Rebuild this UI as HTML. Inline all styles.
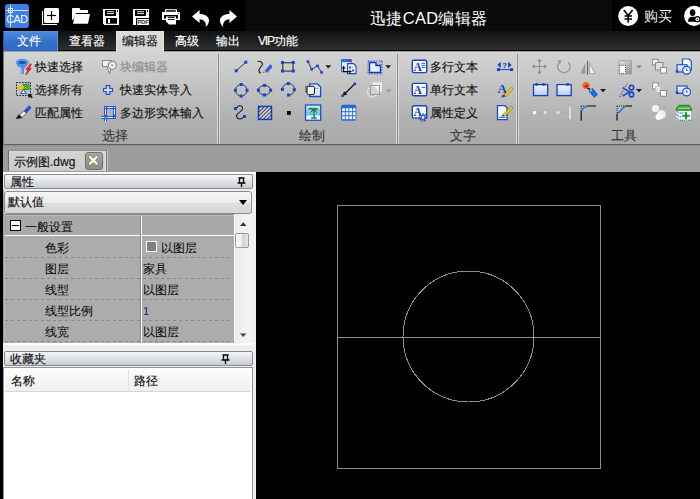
<!DOCTYPE html>
<html><head><meta charset="utf-8">
<style>
*{margin:0;padding:0;box-sizing:border-box}
html,body{width:700px;height:499px;overflow:hidden;background:#000;font-family:"Liberation Sans",sans-serif}
.a{position:absolute}
#title{left:0;top:0;width:700px;height:31px;background:#0a0a0a}
#tl{left:0;top:0;width:245px;height:31px;background:#000}
#tr{left:612px;top:0;width:88px;height:31px;background:#000}
#ttl{left:370px;top:8px;color:#fff;font-size:16.4px;letter-spacing:0.35px;line-height:20px;white-space:nowrap}
#tabs{left:3px;top:31px;width:697px;height:19px;background:linear-gradient(#101111,#1e1f1f 50%,#2f3031)}
#tabline{left:0;top:50px;width:700px;height:1px;background:#000}
.tab{height:19px;color:#fff;font-size:12px;line-height:20px;white-space:nowrap;-webkit-text-stroke:0.15px #fff}
#file{left:3px;top:31px;width:55px;height:20px;padding-right:3px;background:linear-gradient(#4c88dc,#3470c8 55%,#2f68c4);border:1px solid #5b94e4;border-left-color:#2456b0;border-bottom:none;color:#fff;font-size:12px;line-height:18px;text-align:center;-webkit-text-stroke:0.15px #fff}
#seltab{left:116px;top:31px;width:48px;height:21px;padding-right:1px;border-right:1px solid #e2e2e2;background:linear-gradient(#dcdcdc,#d4d4d4);border-left:1px solid #e4e4e4;border-top:1px solid #e0e0e0;color:#111;font-size:12px;line-height:18px;text-align:center;-webkit-text-stroke:0.15px currentColor}
#ribbon{left:3px;top:51px;width:697px;height:94px;border-left:1px solid #7c7c7c;background:linear-gradient(#9a9a9a 0 1px,#d8d8d8 1px,#d3d3d3 2px,#c4c4c4 35%,#b0b0b0 75%,#aaaaaa calc(100% - 1px),#5e5e5e calc(100% - 1px))}
.sep{top:54px;width:3px;height:90px;background:linear-gradient(90deg,#dadada 0 1px,#8a8a8a 1px 2px,#dadada 2px)}
.rt{font-size:12px;line-height:14px;color:#111;white-space:nowrap;-webkit-text-stroke:0.15px currentColor}
.gl{font-size:13px;line-height:14px;color:#333;white-space:nowrap;-webkit-text-stroke:0.1px currentColor}
#doc{left:3px;top:145px;width:697px;height:27px;background:linear-gradient(#929292 0 1px,#979797 1px 2px,#9c9c9c 2px)}
#dtab{left:8px;top:150px;width:99px;height:21px;background:linear-gradient(#d4d4d4,#cacaca);border-top:1px solid #8e8e8e;border-left:1px solid #707070;border-right:1px solid #7a7a7a;box-shadow:inset -2px 0 0 #dadada, 1px 0 0 #c4c4c4}
#dclose{left:85px;top:152px;width:18px;height:18px;border-radius:3px;background:linear-gradient(#a8a8a8,#8a8a8a);border:1px solid #707070}
#panel{left:3px;top:172px;width:253px;height:327px;background:#efefef;border-top:2px solid #fff}
#canvas{left:256px;top:172px;width:444px;height:327px;background:#000}
.hdr{height:15px;border:1px solid #8a8a8a;border-radius:2px;background:linear-gradient(#f6f6f7,#e0e2e5 50%,#c8ccd2);font-size:12px;line-height:14px;color:#101020;padding-left:5px;-webkit-text-stroke:0.15px currentColor}
#combo{left:4px;top:191px;width:248px;height:23px;border:1px solid #8c8c8c;border-radius:3px;background:linear-gradient(#f6f6f6,#ececec 50%,#dedede 52%,#d8d8d8);font-size:12px;line-height:21px;padding-left:3px;color:#111;-webkit-text-stroke:0.15px currentColor}
#grid{left:3px;top:214px;width:231px;height:129px;background:#acacac;border-top:1px solid #8a8a8a;border-left:1px solid #9a9a9a;box-shadow:inset 1px 0 0 #b8b8b8}
.gt{font-size:12px;line-height:14px;color:#000;white-space:nowrap}
.dash{left:5px;width:229px;height:1px;background:repeating-linear-gradient(90deg,#888 0 3px,transparent 3px 6px)}
#sbar{left:234px;top:215px;width:17px;height:128px;background:linear-gradient(90deg,#fff 0 1px,#ececec 1px,#f4f4f4)}
#list{left:3px;top:367px;width:250px;height:132px;background:#fff;border-left:1px solid #8c96a0;border-right:1px solid #8c96a0;border-top:1px solid #8c96a0}
#lhdr{left:5px;top:368px;width:245px;height:24px;background:linear-gradient(#ffffff,#f6f6f7 50%,#eeeff1);border-bottom:1px solid #d6d6d6}
</style></head><body>
<div class="a" id="title"></div>
<div class="a" id="tl"></div>
<div class="a" id="tr"></div>
<svg class="a" style="left:0;top:0" width="700" height="31">
<rect x="5" y="4" width="24" height="24" rx="3" fill="#3d7ee9"/>
<g stroke="#d8e6ff" stroke-width="1" fill="none">
<line x1="10.5" y1="5" x2="10.5" y2="27"/>
<line x1="6" y1="10.5" x2="28" y2="10.5"/>
<rect x="8.5" y="8.5" width="4" height="4"/>
</g>
<text x="6.3" y="23" font-family="Liberation Sans" font-size="10.6" fill="#fff" letter-spacing="-0.4">CAD</text>
<g fill="#fff">
<rect x="44" y="8" width="15" height="15" rx="1.5"/>
<rect x="42" y="11" width="1" height="14"/>
<rect x="42" y="24" width="15" height="1"/>
</g>
<g stroke="#000" stroke-width="1.2"><line x1="51.5" y1="11" x2="51.5" y2="20"/><line x1="47" y1="15.5" x2="56" y2="15.5"/></g>
<g fill="#fff">
<path d="M72,8.5 Q72,8 73,8 L79.5,8 L80.5,10 L87.5,10 Q88,10 88,11 L88,13 L76,13 L73,20 L72,20 Z"/>
<path d="M75,14 L90,14 L88,23.8 L73,23.8 Z"/>
</g>
<g>
<rect x="103" y="9" width="16" height="16" fill="#fff"/>
<rect x="105" y="10" width="11" height="6" fill="#000"/>
<rect x="107" y="11.3" width="7" height="0.9" fill="#fff"/>
<rect x="107" y="13.2" width="7" height="0.9" fill="#fff"/>
<rect x="117" y="10" width="1" height="2" fill="#000"/>
<rect x="106" y="18" width="11" height="5.7" fill="#000"/>
<rect x="108" y="19" width="2" height="4" fill="#fff"/>
<path d="M103,23.5 L104.5,25 L103,25Z" fill="#000"/>
</g>
<g>
<rect x="133" y="9" width="16" height="16" fill="#fff"/>
<rect x="135" y="10" width="11" height="6" fill="#000"/>
<rect x="137" y="11.3" width="7" height="0.9" fill="#fff"/>
<rect x="137" y="13.2" width="7" height="0.9" fill="#fff"/>
<rect x="147" y="10" width="1" height="2" fill="#000"/>
<rect x="136" y="18" width="13" height="7" fill="#000"/>
<rect x="137" y="19" width="12" height="6" fill="#fff"/>
<text x="137.3" y="24.3" font-family="Liberation Sans" font-size="6" font-weight="bold" fill="#333" letter-spacing="-0.2">PDF</text>
</g>
<g>
<rect x="165" y="9.2" width="12" height="3.3" fill="#fff"/>
<rect x="166.2" y="10.2" width="9.6" height="1.5" fill="#000"/>
<rect x="162" y="12" width="18" height="8" fill="#fff"/>
<circle cx="178.5" cy="13.5" r="0.6" fill="#000"/>
<rect x="164" y="15" width="14" height="3.6" fill="#000"/>
<path d="M166,16.5 L176,16.5 L176,24.6 L169,24.6 L166,21.5 Z" fill="#fff"/>
<rect x="168" y="17" width="6.5" height="0.9" fill="#000"/>
<rect x="168" y="19" width="6.5" height="0.9" fill="#000"/>
</g>
<path id="undo" fill="#fff" d="M192,16.6 L199.6,10 L199.6,14 C205,14 209,16.5 209,20.5 C209,23.2 207.5,25.5 205.7,27 C206.5,24 205,19.3 199.6,19.3 L199.6,23 Z"/>
<path fill="#fff" transform="translate(429,0) scale(-1,1)" d="M192,16.6 L199.6,10 L199.6,14 C205,14 209,16.5 209,20.5 C209,23.2 207.5,25.5 205.7,27 C206.5,24 205,19.3 199.6,19.3 L199.6,23 Z"/>
<circle cx="628.2" cy="16" r="10" fill="#fff"/>
<g stroke="#000" stroke-width="1.6" fill="none"><path d="M623.8,10 L628.2,15.5 L632.6,10 M628.2,15.5 L628.2,22.5 M624.5,16 L632,16 M624.5,19 L632,19"/></g>
<circle cx="694.2" cy="15.8" r="10.1" fill="#fff"/>
<g fill="#000"><ellipse cx="692.6" cy="12.6" rx="2.8" ry="3.4"/><path d="M688,21.8 Q688,17.3 691.5,16.8 L694,16.8 Q697,17.2 698,19 L698,21.8 Z"/></g>
<circle cx="697.4" cy="19.2" r="3.1" fill="#000"/><circle cx="697.4" cy="19.2" r="1.9" fill="#fff"/><circle cx="697.4" cy="19.2" r="0.8" fill="#000"/>
</svg>
<div class="a" id="ttl">迅捷CAD编辑器</div>
<div class="a" style="left:644px;top:8px;color:#ececec;font-size:14px;line-height:16px">购买</div>

<div class="a" id="tabs"></div>
<div class="a" id="tabline"></div>
<div class="a" id="ribbon"></div>
<div class="a" id="file">文件</div>
<div class="a tab" style="left:69px;top:31px">查看器</div>
<div class="a" id="seltab">编辑器</div>
<div class="a tab" style="left:175px;top:31px">高级</div>
<div class="a tab" style="left:216px;top:31px">输出</div>
<div class="a tab" style="left:258px;top:31px"><span style="letter-spacing:-1.2px">VIP</span>功能</div>

<div class="a sep" style="left:217px"></div>
<div class="a sep" style="left:396px"></div>
<div class="a sep" style="left:516px"></div>

<div class="a rt" style="left:35px;top:60px">快速选择</div>
<div class="a rt" style="left:35px;top:83px">选择所有</div>
<div class="a rt" style="left:35px;top:106px">匹配属性</div>
<div class="a rt" style="left:120px;top:60px;color:#8a8a8a">块编辑器</div>
<div class="a rt" style="left:120px;top:83px">快速实体导入</div>
<div class="a rt" style="left:120px;top:106px">多边形实体输入</div>
<div class="a gl" style="left:102px;top:129px">选择</div>
<div class="a gl" style="left:299px;top:129px">绘制</div>
<div class="a rt" style="left:430px;top:60px">多行文本</div>
<div class="a rt" style="left:430px;top:83px">单行文本</div>
<div class="a rt" style="left:430px;top:106px">属性定义</div>
<div class="a gl" style="left:450px;top:129px">文字</div>
<div class="a gl" style="left:611px;top:129px">工具</div>
<svg class="a" style="left:0;top:0" width="700" height="145">
<defs>
<linearGradient id="gBlueWin" x1="0" y1="0" x2="0" y2="1"><stop offset="0" stop-color="#f4f8ff"/><stop offset="1" stop-color="#b7cdf3"/></linearGradient>
<linearGradient id="gSky" x1="0" y1="0" x2="0" y2="1"><stop offset="0" stop-color="#c9ecfb"/><stop offset="1" stop-color="#28b3e6"/></linearGradient>
<linearGradient id="gGray" x1="0" y1="0" x2="1" y2="1"><stop offset="0" stop-color="#e6e6e6"/><stop offset="1" stop-color="#8e8e8e"/></linearGradient>
<pattern id="hatch" width="2.7" height="2.7" patternUnits="userSpaceOnUse" patternTransform="rotate(45)"><rect width="2.7" height="2.7" fill="#d0d0d0"/><rect width="0.9" height="2.7" fill="#3a3a3a"/></pattern>
</defs>
<path d="M16,62.5 C16.5,65.5 19.5,67.5 20.3,69 L20.3,73.4 Q22.2,75 24,73.4 L24,69 C24.8,67.5 27.8,65.5 28.3,62.5 Z" fill="#4b8fe4"/>
<ellipse cx="22.2" cy="62.3" rx="6.1" ry="3" fill="#6eaaf0" stroke="#3a7ad6" stroke-width="0.8"/>
<ellipse cx="22.2" cy="62.5" rx="4.3" ry="1.7" fill="#1a56c2"/>
<path d="M19.2,66.6 L21.2,69 L21.2,73.5" stroke="#b8dcff" stroke-width="1" fill="none"/>
<path d="M30.2,63.2 L31.8,64.5 L29.8,68 L31.8,68.3 L26.3,75 L25.3,74.3 L27.6,70.2 L25.4,69.8 Z" fill="#e3191b"/>
<path d="M29.5,65 L27.5,69" stroke="#ff8080" stroke-width="0.6"/>
<rect x="16.5" y="82.5" width="14" height="13" fill="none" stroke="#222" stroke-width="1" stroke-dasharray="1.6,1.2"/>
<rect x="23" y="84" width="6.2" height="5.8" fill="#3cae3f" stroke="#2a8a2a" stroke-width="0.5"/>
<circle cx="21.2" cy="88.2" r="3" fill="#f6c200"/>
<path d="M23.5,88.2 L27.2,93.9 L19.8,93.9 Z" fill="#1d61dc"/><path d="M23.5,90.3 L25.3,93 L21.7,93 Z" fill="#fff"/>
<path d="M28,94 L32.6,94.4 L31.2,95.8 L32.8,97.4 L31.8,98.2 L30.2,96.7 L28.8,98.1 Z" fill="#000"/>
<path d="M23.8,110.8 L28.8,105.2 L31.6,107.8 L26.4,113.2 Z" fill="#1f4fc8"/>
<path d="M25.2,109.6 L29.4,105.6" stroke="#5a90f0" stroke-width="1"/>
<path d="M19.6,115.3 L23.8,110.8 L26.4,113.2 L22,117.6 Z" fill="#ececec" stroke="#3a3a3a" stroke-width="0.7"/>
<path d="M15.8,119 L18.6,114.3 L22.4,118 Z" fill="#111"/>
<rect x="102.5" y="60.5" width="8.5" height="6" fill="#f0f0f0" stroke="#8c8c8c" stroke-width="1"/>
<path d="M106.5,66 L109.6,73.6 L111,68" fill="#f2f2f2" stroke="#7a7a7a" stroke-width="1"/>
<circle cx="112.3" cy="65.3" r="4" fill="#f6f6f6" stroke="#8a8a8a" stroke-width="1.3"/>
<circle cx="112.3" cy="65.3" r="1.2" fill="#aaa"/>
<path d="M106.2,85.6 H109.8 V88.5 H112.5 V91.5 H109.8 V94.4 H106.2 V91.5 H103.5 V88.5 H106.2 Z" fill="#dcdcd6" stroke="#1a4fd8" stroke-width="1.2"/>
<g fill="#1a55da"><rect x="104" y="106" width="12" height="3"/><rect x="101" y="116" width="15" height="3"/><rect x="104" y="106" width="3" height="15"/><rect x="113" y="106" width="3" height="13"/></g>
<g fill="#fff"><rect x="107.3" y="107" width="5.4" height="1"/><rect x="107.3" y="117" width="5.4" height="1"/><rect x="101" y="117" width="3.3" height="1"/><rect x="105" y="109.3" width="1" height="5.4"/><rect x="105" y="119.3" width="1" height="1.7"/><rect x="114" y="109.3" width="1" height="5.4"/><rect x="105" y="107" width="1" height="1"/><rect x="114" y="107" width="1" height="1"/><rect x="105" y="117" width="1" height="1"/><rect x="114" y="117" width="1" height="1"/></g>
<line x1="236.5" y1="70.5" x2="245.5" y2="62.5" stroke="#333" stroke-width="1"/><rect x="234.70" y="69.30" width="3" height="3" fill="#0d46dc"/><rect x="244.30" y="60.70" width="3" height="3" fill="#0d46dc"/>
<path d="M257.5,61.5 C261,60.5 263.5,63 262,65.5 C260.5,67.5 258.5,68.5 259,71 C259.3,72.3 260,73 260.8,73.4" fill="none" stroke="#262626" stroke-width="1.2"/>
<path d="M264.5,71 L270.2,64.3 L272.3,66.3 L266.5,73 Z" fill="#1f66e6"/><path d="M266.5,73 L272.3,66.3 L271.5,68 L267.6,72.2Z" fill="#0d2f9e"/>
<path d="M262.6,74.2 L264.5,71 L266.5,73 Z" fill="#f2f2f2"/><circle cx="263.9" cy="72.3" r="0.9" fill="#e8202a"/>
<rect x="282.8" y="62.8" width="10.2" height="8.3" fill="none" stroke="#222" stroke-width="1"/><rect x="281.00" y="61.00" width="3" height="3" fill="#0d46dc"/><rect x="291.80" y="61.00" width="3" height="3" fill="#0d46dc"/><rect x="281.00" y="69.50" width="3" height="3" fill="#0d46dc"/><rect x="291.80" y="69.50" width="3" height="3" fill="#0d46dc"/>
<path d="M308,61.6 L311.7,69.3 L317.5,65.9 L321.6,72.4" fill="none" stroke="#3a3a3a" stroke-width="1"/><rect x="306.70" y="60.30" width="2.6" height="2.6" fill="#0d46dc"/><rect x="310.40" y="68.00" width="2.6" height="2.6" fill="#0d46dc"/><rect x="316.20" y="64.60" width="2.6" height="2.6" fill="#0d46dc"/><rect x="320.30" y="71.10" width="2.6" height="2.6" fill="#0d46dc"/><path d="M325.3,65.2 h6 l-3,3.2 z" fill="#1a1a1a"/>
<rect x="341.6" y="59.6" width="9.5" height="12" fill="#e4ecfa" stroke="#2564dc" stroke-width="1"/><rect x="341.1" y="59.1" width="10.5" height="3" fill="#2a70ea"/><rect x="348.2" y="59.8" width="2.4" height="1.8" fill="#e0101a"/>
<path d="M347.6,63.6 H353.5 L356,66 V73.6 H347.6 Z" fill="#f4f7fd" stroke="#1a48c4" stroke-width="1.1"/>
<rect x="349.00" y="66.50" width="2" height="2" fill="#1658e6"/><rect x="352.00" y="69.50" width="2" height="2" fill="#1658e6"/><rect x="351.5" y="66.8" width="2.5" height="0.7" fill="#888"/>
<path d="M343.6,67.5 V71.6 H349.8" fill="none" stroke="#111" stroke-width="1.2"/><path d="M341.6,68.5 L343.6,65.8 L345.6,68.5Z M349.3,69.8 L352,71.6 L349.3,73.4Z" fill="#111"/>
<rect x="368" y="61" width="14" height="13" fill="none" stroke="#1a4fcf" stroke-width="1" stroke-dasharray="1.2,1.6"/>
<path d="M369.5,62.5 L376,62.5 L376,65.5 L380.5,65.5 L380.5,72.5 L369.5,72.5 Z" fill="#e8f0fd" stroke="#0f3cb8" stroke-width="1.4"/>
<path d="M377,65 L382,60 M378.5,66 L383,61.5" stroke="#1a4fcf" stroke-width="0.8" stroke-dasharray="1,1"/>
<path d="M385.2,65.3 h6 l-3,3.2 z" fill="#1a1a1a"/>
<circle cx="241.2" cy="90.3" r="5.8" fill="none" stroke="#3a3a3a" stroke-width="1"/><rect x="239.70" y="83.00" width="3" height="3" fill="#0d46dc"/><rect x="233.90" y="88.80" width="3" height="3" fill="#0d46dc"/><rect x="245.50" y="88.80" width="3" height="3" fill="#0d46dc"/><rect x="239.70" y="94.60" width="3" height="3" fill="#0d46dc"/>
<ellipse cx="264.5" cy="90.2" rx="6.1" ry="4.8" fill="none" stroke="#3a3a3a" stroke-width="1"/><rect x="263.00" y="83.90" width="3" height="3" fill="#0d46dc"/><rect x="256.90" y="88.70" width="3" height="3" fill="#0d46dc"/><rect x="269.10" y="88.70" width="3" height="3" fill="#0d46dc"/><rect x="263.00" y="93.50" width="3" height="3" fill="#0d46dc"/>
<path d="M282.5,89.4 A6,5.9 0 1 1 288.6,95.2" fill="none" stroke="#3a3a3a" stroke-width="1"/><rect x="280.90" y="87.90" width="3" height="3" fill="#0d46dc"/><rect x="286.80" y="82.10" width="3" height="3" fill="#0d46dc"/><rect x="292.80" y="88.10" width="3" height="3" fill="#0d46dc"/><rect x="287.10" y="93.60" width="3" height="3" fill="#0d46dc"/>
<path d="M309.6,83.8 H317.5 L320.6,87 V96.5 H309.6 Z" fill="#dde7f8" stroke="#1a4cc8" stroke-width="1.3"/>
<rect x="307" y="86.3" width="7.5" height="8.3" rx="1.5" fill="#f2f2f2" stroke="#1d1d1d" stroke-width="1"/>
<path d="M305,86.8 H308 M305,89.2 H307.5 M305,91.6 H307.5" stroke="#222" stroke-width="0.9"/><path d="M314.5,88.3 H318" stroke="#666" stroke-width="0.6"/>
<line x1="344" y1="94.5" x2="354.6" y2="84" stroke="#1a1a1a" stroke-width="1.3"/><path d="M342.4,96 L344,91.2 L347.2,94.4 Z" fill="#111"/><rect x="353.50" y="82.60" width="2.6" height="2.6" fill="#0d46dc"/><rect x="341.30" y="94.70" width="2.4" height="2.4" fill="#0d46dc"/>
<circle cx="372.5" cy="92" r="5" fill="none" stroke="#ececec" stroke-width="1.6" stroke-dasharray="2,1"/><rect x="372.5" y="82.3" width="9.5" height="9.5" fill="#f0f0f0" opacity="0.9"/><rect x="370.6" y="85.6" width="8.8" height="8.8" fill="#f4f4f4" stroke="#8e8e8e" stroke-width="0.9"/><path d="M371.1,94 V86.1 A7.9,7.9 0 0 1 379,94 Z" fill="#d2d2d2"/><path d="M385.5,89.2 h6 l-3,3.2 z" fill="#9a9a9a"/>
<path d="M237,107.8 C238,105 242.6,105 242.6,108.5 C242.6,111.3 237,112.8 236.6,115.6 C236.2,118.6 240.6,120.3 243.2,117.4" fill="none" stroke="#1a1a1a" stroke-width="1.1"/><rect x="234.00" y="107.00" width="3" height="3" fill="#0d46dc"/><rect x="243.00" y="115.00" width="3" height="3" fill="#0d46dc"/>
<rect x="258.5" y="106.4" width="13" height="13" fill="url(#hatch)" stroke="#0c40cc" stroke-width="1.5"/>
<rect x="287" y="111" width="3.8" height="3.9" fill="#000"/>
<rect x="305.5" y="105" width="15.2" height="15.2" fill="url(#gSky)" stroke="#1747c2" stroke-width="1.2"/><rect x="306.2" y="115.5" width="13.8" height="4" fill="#eef6fb"/>
<path d="M313.5,108.5 C311,107 308.5,108 307.8,110 C309.5,109.3 311,109.5 312.5,110 C310.5,111 309.8,112.5 310,113.5 C311.3,112 312.2,111.3 313,111 L313.6,117.8 H315 L314.2,111 C315.5,111.5 316.5,112.5 317,114 C317.4,112 316.5,110.5 315,110 C316.8,109.5 318.3,110 319,110.5 C318.5,108.5 316,107.5 313.5,108.5 Z" fill="#1e7a3c"/><rect x="311" y="117.3" width="6" height="1.5" rx="0.7" fill="#1e7a3c"/>
<rect x="341" y="104.7" width="15.3" height="16" rx="1.8" fill="#1f6ae6"/>
<rect x="342.20" y="108.20" width="2.7" height="3" fill="#f0f5ff"/>
<rect x="345.75" y="108.20" width="2.7" height="3" fill="#f0f5ff"/>
<rect x="349.30" y="108.20" width="2.7" height="3" fill="#f0f5ff"/>
<rect x="352.85" y="108.20" width="2.7" height="3" fill="#f0f5ff"/>
<rect x="342.20" y="112.20" width="2.7" height="3" fill="#f0f5ff"/>
<rect x="345.75" y="112.20" width="2.7" height="3" fill="#f0f5ff"/>
<rect x="349.30" y="112.20" width="2.7" height="3" fill="#f0f5ff"/>
<rect x="352.85" y="112.20" width="2.7" height="3" fill="#f0f5ff"/>
<rect x="342.20" y="116.20" width="2.7" height="3" fill="#f0f5ff"/>
<rect x="345.75" y="116.20" width="2.7" height="3" fill="#f0f5ff"/>
<rect x="349.30" y="116.20" width="2.7" height="3" fill="#f0f5ff"/>
<rect x="352.85" y="116.20" width="2.7" height="3" fill="#f0f5ff"/>
<rect x="412.3" y="60.3" width="14.4" height="12.3" rx="1.5" fill="#fafcff" stroke="#1744c4" stroke-width="1.4"/><text x="413.4" y="70.7" font-family="Liberation Serif" font-weight="bold" font-size="11.6" fill="#1a3cae">A</text><rect x="421.5" y="62.8" width="3.8" height="1" fill="#2a64dc"/><rect x="421.5" y="64.9" width="3.8" height="1" fill="#2a64dc"/><rect x="421.5" y="67.0" width="3.8" height="1" fill="#2a64dc"/>
<rect x="412.3" y="83.4" width="14.4" height="12.3" rx="1.5" fill="#fafcff" stroke="#1744c4" stroke-width="1.4"/><text x="413.4" y="93.80000000000001" font-family="Liberation Serif" font-weight="bold" font-size="11.6" fill="#1a3cae">A</text><rect x="421.5" y="86.9" width="3.8" height="1" fill="#2a64dc"/>
<rect x="412.3" y="105.8" width="14.4" height="12.3" rx="1.5" fill="#fafcff" stroke="#1744c4" stroke-width="1.4"/><text x="413.4" y="116.2" font-family="Liberation Serif" font-weight="bold" font-size="11.6" fill="#1a3cae">A</text>
<circle cx="423" cy="117.5" r="3.3" fill="none" stroke="#1d4fc8" stroke-width="2" stroke-dasharray="1.4,1"/><circle cx="423" cy="117.5" r="1.9" fill="#fff" stroke="#1a44b8" stroke-width="1"/>
<path d="M497.3,64.9 L500.8,61.8 V68Z M511.6,64.9 L508.1,61.8 V68Z" fill="#1746c8"/><text x="502.2" y="67.8" font-family="Liberation Sans" font-weight="bold" font-size="7.6" fill="#1238b8">?</text>
<rect x="497" y="68.2" width="3" height="2.8" fill="#1440c0"/><rect x="510" y="68.2" width="3" height="2.8" fill="#1440c0"/><rect x="499" y="69.1" width="12" height="1" fill="#1746c8"/>
<text x="497.6" y="93.2" font-family="Liberation Serif" font-weight="bold" font-size="13" fill="#1a44c0">A</text>
<path d="M504,95 L511.5,87 L513.3,88.8 L505.8,96.8 Z" fill="#f2d200" stroke="#333" stroke-width="0.4"/><path d="M501.3,97.4 L503,94.5 L505.3,96.8 Z" fill="#1a3aa8"/><rect x="503.5" y="94.2" width="1.6" height="1.6" fill="#e01818" transform="rotate(-45 504.3 95)"/>
<path d="M497.5,105.7 H505 L507,107.5 V119.6 H497.5 Z" fill="#f6f9ff" stroke="#1a4cc8" stroke-width="1.3"/><rect x="499" y="117" width="6.5" height="0.9" fill="#2a64dc"/>
<path d="M503,114.5 L511.3,106 L513,107.8 L504.8,116.3 Z" fill="#f2d200" stroke="#333" stroke-width="0.4"/><path d="M501,116.5 L503,114.5 L504.8,116.3 Z" fill="#1a3aa8"/>
<g stroke="#8f8f8f" stroke-width="1" fill="none"><path d="M539.5,60 V73 M533,66.5 H546"/></g><g fill="#8f8f8f"><path d="M539.5,58.8 L537,61.5 H542Z M539.5,74.2 L537,71.5 H542Z M532,66.5 L534.7,64 V69Z M547,66.5 L544.3,64 V69Z"/></g>
<path d="M559.5,62.8 A5.8,5.8 0 1 0 568,62.5" fill="none" stroke="#9a9a9a" stroke-width="2"/><path d="M557,60.5 L561.5,60 L560.5,64.5 Z" fill="#9a9a9a"/><path d="M560.3,63.5 A4.8,4.8 0 1 0 567.5,63.3" fill="none" stroke="#f2f2f2" stroke-width="0.7"/>
<rect x="587" y="60.8" width="1.1" height="14" fill="#666"/><path d="M585.5,73.5 V62.8 L580.5,73.5Z" fill="#9a9a9a"/><path d="M589.5,73.5 V62.8 L594.8,73.5Z" fill="#f2f2f2" stroke="#9a9a9a" stroke-width="0.8"/>
<rect x="619.2" y="60.7" width="12.2" height="13.2" fill="url(#gGray)" stroke="#9a9a9a" stroke-width="0.8"/><rect x="619.3" y="65.3" width="6.2" height="8.3" fill="#fafafa" stroke="#333" stroke-width="0.9" stroke-dasharray="0.9,1.1"/><path d="M636,65.5 h6 l-3,3.2 z" fill="#8c8c8c"/>
<rect x="652.6" y="59.4" width="5.6" height="5.4" fill="#fafafa" stroke="#8a8a8a" stroke-width="1"/><rect x="655.5" y="62.5" width="7.5" height="7.5" fill="#dcdcdc" stroke="#8a8a8a" stroke-width="1"/><rect x="660.6" y="67.5" width="6" height="5.6" fill="#fafafa" stroke="#8a8a8a" stroke-width="1"/>
<path d="M682.5,59 H689 L691.3,61.3 V70 H682.5Z" fill="#fbfcff" stroke="#1a4fd0" stroke-width="1.2"/><rect x="677" y="64.8" width="10" height="7.2" fill="url(#gBlueWin)" stroke="#1a4fd0" stroke-width="1.2"/><rect x="675.8" y="70.3" width="2.5" height="2.2" fill="#0f3cc0"/>
<circle cx="686.6" cy="70.3" r="3.9" fill="#e8f0ff" stroke="#1a4fd0" stroke-width="1.2"/><path d="M686.6,68.3 V70.5 H688" stroke="#2a64dc" stroke-width="0.9" fill="none"/>
<rect x="533.5" y="84.6" width="14.2" height="11" fill="url(#gBlueWin)" stroke="#1540c0" stroke-width="1.3"/><rect x="535.4" y="83.2" width="2.4" height="2.4" fill="#0f36b0"/><rect x="542.4" y="83.2" width="2.4" height="2.4" fill="#0f36b0"/>
<rect x="557" y="84.6" width="14.2" height="11" fill="url(#gBlueWin)" stroke="#1540c0" stroke-width="1.3"/><rect x="566.4" y="83.2" width="2.4" height="2.4" fill="#0f36b0"/>
<circle cx="586" cy="85.5" r="3.6" fill="#f26a1b"/><circle cx="586.5" cy="86.2" r="1.8" fill="#e0201a"/><path d="M587.5,89 Q589,88 590,89.5" stroke="#000" stroke-width="1.1" fill="none"/>
<path d="M589,91 L592.5,88.5 L597.4,94.5 L594.2,97.4 Z" fill="#1f6fdc" stroke="#0c3ea8" stroke-width="0.7"/><path d="M590,91 L592,89.8" stroke="#fff" stroke-width="0.9"/><path d="M600,89 h6 l-3,3.2 z" fill="#1a1a1a"/>
<path d="M619.6,97 L623.5,90 M624,89 L627.5,83" stroke="#222" stroke-width="0.9" stroke-dasharray="1,1.1" fill="none"/>
<path d="M622.5,87.5 L629.5,92 L622.5,96" fill="none" stroke="#2456c6" stroke-width="1.8"/><ellipse cx="631.5" cy="87.6" rx="2.2" ry="2.4" fill="none" stroke="#1248c8" stroke-width="1.6"/><ellipse cx="631.5" cy="94.5" rx="2.2" ry="2.4" fill="none" stroke="#1248c8" stroke-width="1.6"/><path d="M636,89 h6 l-3,3.2 z" fill="#1a1a1a"/>
<rect x="652.6" y="82.8" width="5.8" height="6.2" fill="#fafafa" stroke="#8a8a8a" stroke-width="1"/><rect x="655.8" y="86" width="5" height="6.5" fill="#e4e4e4" stroke="#bcbcbc" stroke-width="0.8"/><rect x="660.5" y="90.5" width="6" height="5.8" fill="#fafafa" stroke="#8a8a8a" stroke-width="1"/>
<rect x="677" y="86" width="10" height="7.3" fill="url(#gBlueWin)" stroke="#1a4fd0" stroke-width="1.2"/><rect x="675.8" y="91.5" width="2.5" height="2.2" fill="#0f3cc0"/><circle cx="686.6" cy="92" r="3.9" fill="#e8f0ff" stroke="#1a4fd0" stroke-width="1.2"/><path d="M686.6,90 V92.2 H688" stroke="#2a64dc" stroke-width="0.9" fill="none"/>
<rect x="532.6" y="110.8" width="3.8" height="3.8" fill="#fbfbfb" stroke="#a8a8a8" stroke-width="0.6"/><rect x="543.3" y="110.8" width="3.6" height="3.6" fill="#e2e2e2" stroke="#a8a8a8" stroke-width="0.6"/><path d="M537.5,112.7 H542.5" stroke="#a0a0a0" stroke-dasharray="1,1.2"/>
<rect x="556" y="111" width="4.2" height="3.2" fill="#e0e0e0" stroke="#a8a8a8" stroke-width="0.7"/><path d="M561,112.6 H567" stroke="#a0a0a0" stroke-dasharray="1,1.2"/><rect x="568.8" y="106.2" width="2.6" height="13.6" fill="#e6e6e6" stroke="#a8a8a8" stroke-width="0.7"/>
<path d="M581.2,111 V120.7 M588,106 H596" stroke="#000" stroke-width="1.1" fill="none"/><path d="M581.2,106 H588 M581.2,106 V111" stroke="#000" stroke-width="0.9" stroke-dasharray="0.9,1.1" fill="none"/><path d="M581.5,111.5 Q582.5,106.8 588,106.3" stroke="#1f6ee8" stroke-width="1.3" fill="none"/>
<path d="M617,114 V120.5 M625,106 H632" stroke="#000" stroke-width="1.1" fill="none"/><path d="M617,106 H625 M617,106 V114" stroke="#000" stroke-width="0.9" stroke-dasharray="0.9,1.1" fill="none"/><path d="M617.3,114 L625,106.3" stroke="#1f6ee8" stroke-width="1.4" fill="none"/>
<circle cx="655.5" cy="108.5" r="3.5" fill="#f2f2f2"/><circle cx="661.5" cy="114.5" r="4.4" fill="#efefef"/><circle cx="658.5" cy="117" r="3" fill="#fafafa"/><path d="M663,106 L666,109 M666,106 L663,109" stroke="#a0a0a0" stroke-width="0.9"/>
<rect x="676.5" y="109.5" width="14.5" height="11" fill="#f6f8fc"/>
<path d="M676.3,108.8 L679,105.3 H689.3 L691.6,108.8 V110.3 H676.3 Z" fill="#38ac38" stroke="#0f6e0f" stroke-width="0.8"/><rect x="678.2" y="107.6" width="11.8" height="1.1" fill="#a6e6a6"/>
<path d="M677,110.8 Q677,113 679.5,113 H684 M677,114.3 Q677,116.6 679.5,116.6 H683 M677,118 Q677,120.2 679.5,120.2 H691" stroke="#1a4fd0" stroke-width="1" stroke-dasharray="1.3,0.7" fill="none"/>
<path d="M684.6,111.6 H687.4 V114.4 H690.2 V117.2 H687.4 V120 H684.6 V117.2 H681.8 V114.4 H684.6Z" fill="#1e9a22" stroke="#fff" stroke-width="0.8"/>
</svg>

<div class="a" id="doc"></div>
<div class="a" id="dtab"></div>
<div class="a rt" style="left:14px;top:155px;font-size:12px">示例图.dwg</div>
<div class="a" id="dclose"></div>
<svg class="a" style="left:85px;top:152px" width="18" height="18"><path d="M5,5 L11.6,11.6 M11.6,5 L5,11.6" stroke="#8a7a30" stroke-width="3.8" stroke-linecap="round"/><path d="M5,5 L11.6,11.6 M11.6,5 L5,11.6" stroke="#fff" stroke-width="2.4" stroke-linecap="round"/></svg>

<div class="a" id="panel"></div>
<div class="a hdr" style="left:4px;top:174px;width:249px">属性</div>
<svg class="a" style="left:236px;top:177px" width="12" height="11"><path d="M2.5,1 H8.5 M3.5,1 V6 M7.5,1 V6 M1.5,6 H9.5 M5.5,6 V10" stroke="#000" stroke-width="1.3" fill="none"/></svg>
<div class="a" id="combo">默认值</div>
<svg class="a" style="left:239px;top:200px" width="10" height="6"><path d="M0,0 H8 L4,5 Z" fill="#000"/></svg>

<div class="a" style="left:3px;top:189px;width:1px;height:26px;background:#a8a8a8"></div>
<div class="a" id="grid"></div>
<div class="a" style="left:5px;top:215px;width:229px;height:20px;background:#a9a9a9;border-top:1px solid #bdbdbd;border-left:1px solid #9c9c9c"></div>
<div class="a" style="left:5px;top:235px;width:229px;height:1px;background:#fff"></div>
<div class="a" style="left:140px;top:216px;width:1px;height:127px;background:#8c8c8c"></div>
<div class="a" style="left:141px;top:216px;width:1px;height:127px;background:#fff"></div>
<div class="a" style="left:10px;top:220px;width:11px;height:11px;border:1px solid #000;background:#fff"></div>
<div class="a" style="left:12px;top:225px;width:7px;height:1px;background:#000"></div>
<div class="a gt" style="left:25px;top:220px">一般设置</div>
<div class="a dash" style="top:257px"></div>
<div class="a dash" style="top:278px"></div>
<div class="a dash" style="top:299px"></div>
<div class="a dash" style="top:320px"></div>
<div class="a dash" style="top:341px"></div>
<div class="a gt" style="left:45px;top:241px">色彩</div>
<div class="a gt" style="left:45px;top:262px">图层</div>
<div class="a gt" style="left:45px;top:283px">线型</div>
<div class="a gt" style="left:45px;top:304px">线型比例</div>
<div class="a gt" style="left:45px;top:325px">线宽</div>
<div class="a" style="left:146px;top:241px;width:11px;height:11px;border:1px solid #fff;background:#808080"></div>
<div class="a gt" style="left:161px;top:241px">以图层</div>
<div class="a gt" style="left:143px;top:262px">家具</div>
<div class="a gt" style="left:143px;top:283px">以图层</div>
<div class="a gt" style="left:143px;top:304px;font-size:11px;color:#1a2060">1</div>
<div class="a gt" style="left:143px;top:325px">以图层</div>
<div class="a" id="sbar"></div>
<div class="a" style="left:3px;top:343px;width:250px;height:2px;background:#fff"></div>
<svg class="a" style="left:239px;top:221px" width="9" height="6"><path d="M1,5 L4.2,1.2 L7.5,5 Z" fill="#333"/></svg>
<div class="a" style="left:235px;top:233px;width:14px;height:15px;border:1px solid #9a9a9a;border-radius:2px;background:linear-gradient(90deg,#fafafa,#f0f0f0 45%,#d2d2d2 55%,#e6e6e6)"></div>
<svg class="a" style="left:239px;top:333px" width="9" height="5"><path d="M1,0.5 L7.5,0.5 L4.2,4 Z" fill="#444"/></svg>

<div class="a hdr" style="left:4px;top:351px;width:249px">收藏夹</div>
<svg class="a" style="left:220px;top:354px" width="12" height="11"><path d="M2.5,1 H8.5 M3.5,1 V6 M7.5,1 V6 M1.5,6 H9.5 M5.5,6 V10" stroke="#000" stroke-width="1.3" fill="none"/></svg>
<div class="a" id="list"></div>
<div class="a" id="lhdr"></div>
<div class="a" style="left:128px;top:370px;width:1px;height:21px;background:#e0e0e0"></div>
<div class="a rt" style="left:11px;top:374px;font-size:12px">名称</div>
<div class="a rt" style="left:134px;top:374px;font-size:12px">路径</div>

<div class="a" id="canvas"></div>
<svg class="a" style="left:0;top:0" width="700" height="499">
<g fill="none" stroke="#8e8e8e" stroke-width="1" shape-rendering="crispEdges">
<rect x="337.5" y="205.5" width="263" height="263"/>
<line x1="337" y1="337.5" x2="601" y2="337.5"/>
<circle cx="468.5" cy="336.5" r="65.5"/>
</g>
</svg>
</body></html>
